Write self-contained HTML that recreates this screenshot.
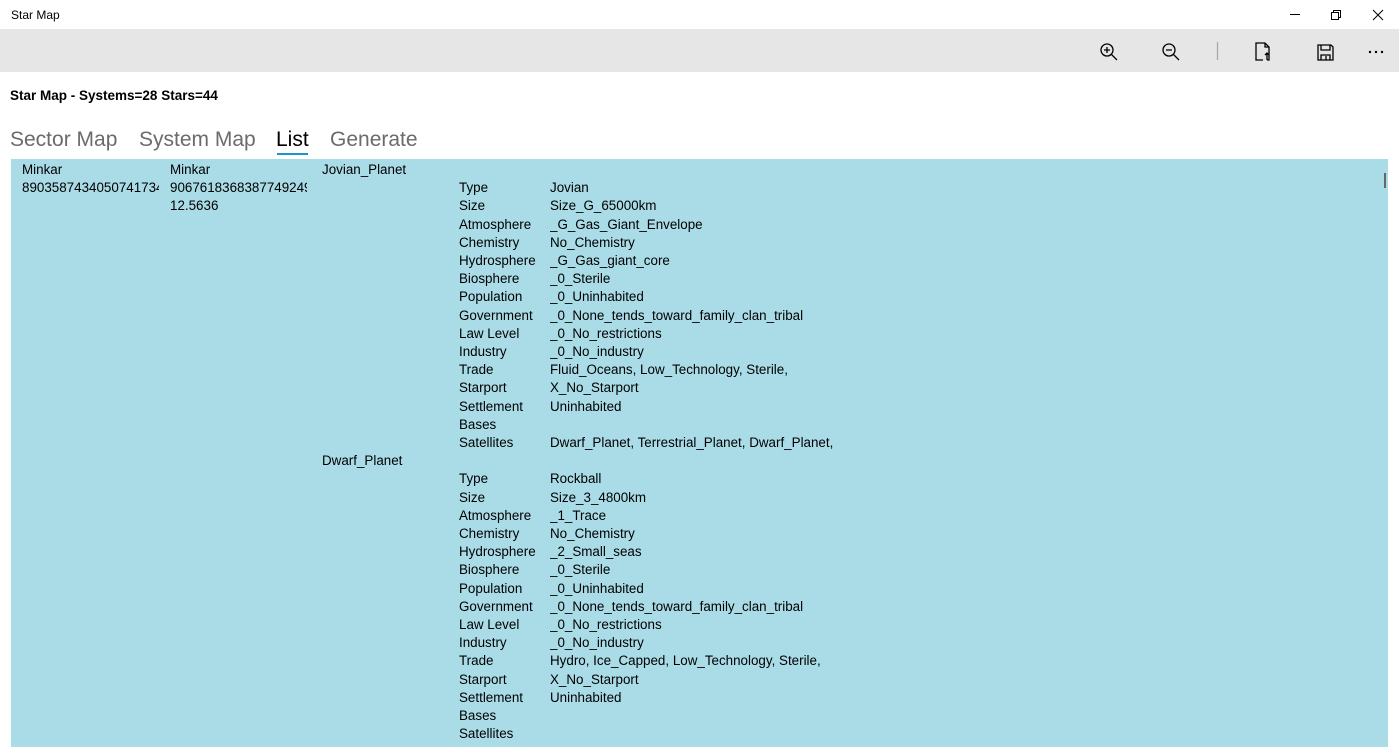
<!DOCTYPE html>
<html><head><meta charset="utf-8"><style>
*{margin:0;padding:0;box-sizing:border-box}
body{width:1399px;height:747px;overflow:hidden;background:#fff;font-family:"Segoe UI","Liberation Sans",sans-serif;color:#000;position:relative}
.title{position:absolute;left:11px;top:8px;font-size:12px}
.win{position:absolute;top:0}
.bar{position:absolute;left:0;top:29px;width:1399px;height:43px;background:#e6e6e6}
.h{position:absolute;left:10px;top:88px;font-size:13.5px;font-weight:bold}
.tab{position:absolute;top:128px;font-size:21px;color:#6b6b6b}
.list{position:absolute;left:11px;top:159px;width:1377px;height:588px;background:#aadce8;overflow:hidden;font-size:13.4px}
.c{position:absolute;line-height:18.2px;white-space:nowrap;overflow:hidden}
</style></head><body>
<div class="title">Star Map</div>
<svg class="win" style="left:1285px;top:5px" width="110" height="20" fill="none" stroke="#000" stroke-width="1">
<line x1="5" y1="9.5" x2="15" y2="9.5"/>
<rect x="46.5" y="7.5" width="7" height="7"/><path d="M48.5 7.5V5.5H55.5V12.5H53.5"/>
<path d="M88 5L98 15M98 5L88 15"/>
</svg>
<div class="bar"></div>
<svg style="position:absolute;left:1095px;top:39px" width="300" height="28" fill="none" stroke="#000" stroke-width="1.3">
<circle cx="12" cy="11" r="6"/><path d="M16.5 15.5L22 21M9 11H15M12 8V14"/>
<circle cx="74" cy="11" r="6"/><path d="M78.5 15.5L84 21M71 11H77"/>
<line x1="122.5" y1="3" x2="122.5" y2="21" stroke="#aaa"/>
<path d="M168 21H161V4H170L174 8V21H172M170 4V8H174M172 21V14M170 16L172 14L174 16"/>
<path d="M223 6H236L238 8V21H223Z M226 6V11H235V6 M226 21V16H235V21 M231 17V21"/>
<g fill="#000" stroke="none"><circle cx="275" cy="13" r="1.2"/><circle cx="281" cy="13" r="1.2"/><circle cx="287" cy="13" r="1.2"/></g>
</svg>
<div class="h">Star Map - Systems=28 Stars=44</div>
<div class="tab" style="left:10px">Sector Map</div>
<div class="tab" style="left:139px">System Map</div>
<div class="tab" style="left:276px;color:#000">List</div>
<div style="position:absolute;left:277px;top:153px;width:31px;height:2px;background:#1a94c9"></div>
<div class="tab" style="left:330px">Generate</div>
<div class="list">
<div class="c" style="left:11px;top:2px;width:137px">Minkar<br>890358743405074173437</div>
<div class="c" style="left:159px;top:2px;width:137px">Minkar<br>906761836838774924934<br>12.5636</div>
<div class="c" style="left:311px;top:2px">Jovian_Planet<br><br><br><br><br><br><br><br><br><br><br><br><br><br><br><br>Dwarf_Planet</div>
<div class="c" style="left:448px;top:20.2px">Type<br>Size<br>Atmosphere<br>Chemistry<br>Hydrosphere<br>Biosphere<br>Population<br>Government<br>Law Level<br>Industry<br>Trade<br>Starport<br>Settlement<br>Bases<br>Satellites<br><br>Type<br>Size<br>Atmosphere<br>Chemistry<br>Hydrosphere<br>Biosphere<br>Population<br>Government<br>Law Level<br>Industry<br>Trade<br>Starport<br>Settlement<br>Bases<br>Satellites</div>
<div class="c" style="left:539px;top:20.2px">Jovian<br>Size_G_65000km<br>_G_Gas_Giant_Envelope<br>No_Chemistry<br>_G_Gas_giant_core<br>_0_Sterile<br>_0_Uninhabited<br>_0_None_tends_toward_family_clan_tribal<br>_0_No_restrictions<br>_0_No_industry<br>Fluid_Oceans, Low_Technology, Sterile,<br>X_No_Starport<br>Uninhabited<br><br>Dwarf_Planet, Terrestrial_Planet, Dwarf_Planet,<br><br>Rockball<br>Size_3_4800km<br>_1_Trace<br>No_Chemistry<br>_2_Small_seas<br>_0_Sterile<br>_0_Uninhabited<br>_0_None_tends_toward_family_clan_tribal<br>_0_No_restrictions<br>_0_No_industry<br>Hydro, Ice_Capped, Low_Technology, Sterile,<br>X_No_Starport<br>Uninhabited</div>
<div style="position:absolute;left:1373px;top:14px;width:2px;height:15px;background:#666"></div>
</div>
</body></html>
